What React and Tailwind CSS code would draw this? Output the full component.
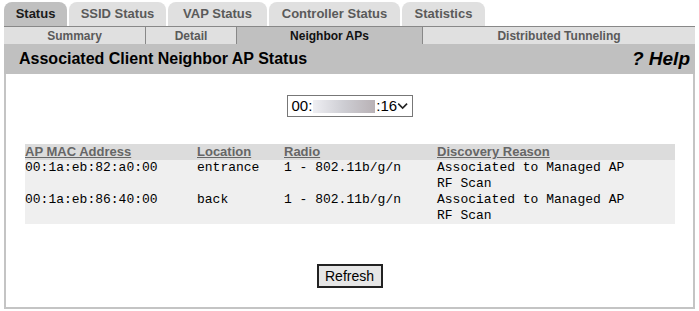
import React from "react";

const tabs = ["Status", "SSID Status", "VAP Status", "Controller Status", "Statistics"];
const tabWidths = ["w-[63px]", "w-[97px]", "w-[99px]", "w-[131px]", "w-[83px]"];

const subTabs = [
  { label: "Summary", w: "w-[141px]" },
  { label: "Detail", w: "w-[91px]" },
  { label: "Neighbor APs", w: "w-[186px]", active: true },
  { label: "Distributed Tunneling", w: "flex-1" },
];

const rows = [
  { mac: "00:1a:eb:82:a0:00", loc: "entrance", radio: "1 - 802.11b/g/n" },
  { mac: "00:1a:eb:86:40:00", loc: "back", radio: "1 - 802.11b/g/n" },
];

export default function App() {
  return (
    <div className="w-[699px] h-[311px] bg-white font-['Liberation_Sans',Arial,sans-serif] pl-[4px] pr-[4px] pt-[2px]">
      {/* main tabs */}
      <div className="flex gap-[2px] h-[24px]">
        {tabs.map((t, i) => (
          <div
            key={t}
            className={`${tabWidths[i]} rounded-t-[8px] flex items-center justify-center text-[13px] font-bold ${
              i === 0 ? "bg-[#c0c0c0] text-[#1a1a1a]" : "bg-[#e0e0e0] text-[#5a5a5a]"
            }`}
          >
            {t}
          </div>
        ))}
      </div>
      {/* sub tabs */}
      <div className="flex h-[18px] border-t border-[#888] bg-[#e0e0e0]">
        {subTabs.map((s, i) => (
          <div
            key={s.label}
            className={`${s.w} flex items-center justify-center text-[12px] font-bold ${
              i > 0 ? "border-l border-[#888]" : ""
            } ${s.active ? "bg-[#c0c0c0] text-[#111]" : "text-[#5a5a5a]"}`}
          >
            {s.label}
          </div>
        ))}
      </div>
      {/* header */}
      <div className="h-[30px] bg-[#c0c0c0] flex items-center justify-between pl-[15px] pr-[5px]">
        <span className="text-[16px] font-bold text-black">Associated Client Neighbor AP Status</span>
        <span className="text-[19px] font-bold italic text-black">? Help</span>
      </div>
      {/* panel */}
      <div className="h-[235px] border-l-2 border-r-2 border-b-2 border-[#c4c4c4] px-[19px]">
        <div className="flex justify-center pt-[21px]">
          <div className="w-[126px] h-[22px] border border-[#777] flex items-center justify-between pl-[4px] pr-[3px] text-[15px] text-black">
            <span className="flex items-center">
              00:
              <span className="inline-block w-[62px] h-[13px] bg-gradient-to-r from-[#e8e8ee] via-[#b8b8c0] to-[#9a9096] opacity-70 mx-[1px]" />
              :16
            </span>
            <svg width="14" height="10" viewBox="0 0 14 10">
              <path d="M1.5 2 L7 7.5 L12.5 2" fill="none" stroke="#222" strokeWidth="2" />
            </svg>
          </div>
        </div>
        <table className="mt-[27px] w-[650px] border-collapse">
          <thead>
            <tr className="bg-[#dcdcdc] h-[16px]">
              {["AP MAC Address", "Location", "Radio", "Discovery Reason"].map((h, i) => (
                <th
                  key={h}
                  className={`text-left p-0 text-[13px] font-bold text-[#666] underline leading-[16px] ${
                    ["w-[172px]", "w-[87px]", "w-[153px]", ""][i]
                  }`}
                >
                  {h}
                </th>
              ))}
            </tr>
          </thead>
          <tbody className="bg-[#efefef] font-['Liberation_Mono','Courier_New',monospace] text-[13px] text-black leading-[16px]">
            {rows.map((r) => (
              <tr key={r.mac} className="align-top">
                <td className="p-0">{r.mac}</td>
                <td className="p-0">{r.loc}</td>
                <td className="p-0">{r.radio}</td>
                <td className="p-0">
                  Associated to Managed AP
                  <br />
                  RF Scan
                </td>
              </tr>
            ))}
          </tbody>
        </table>
        <div className="flex justify-center mt-[40px]">
          <button className="w-[66px] h-[24px] border-2 border-[#222] bg-[#e6e6e6] text-[14px] text-black flex items-center justify-center">
            Refresh
          </button>
        </div>
      </div>
    </div>
  );
}
